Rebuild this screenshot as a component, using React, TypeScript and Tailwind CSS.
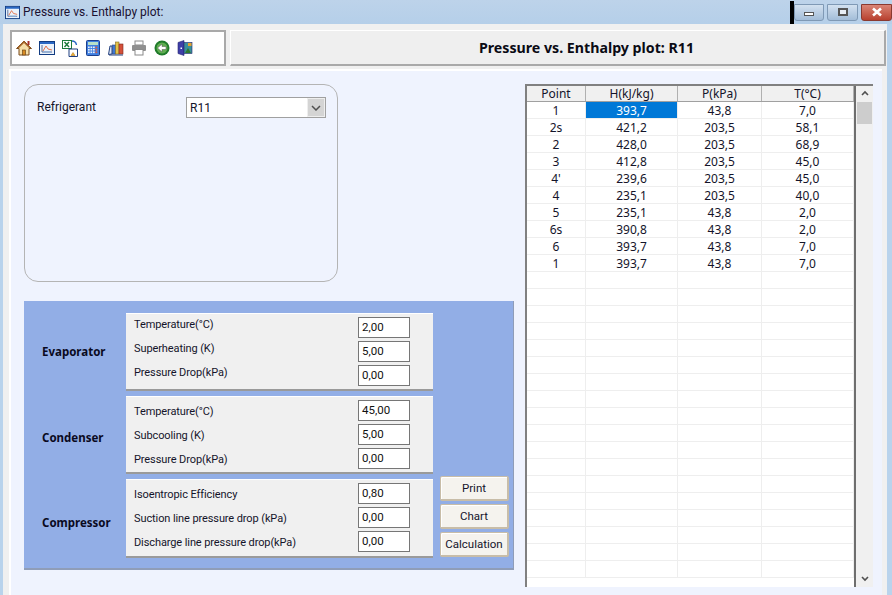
import React from "react";

const rows = [
  ["1", "393,7", "43,8", "7,0"],
  ["2s", "421,2", "203,5", "58,1"],
  ["2", "428,0", "203,5", "68,9"],
  ["3", "412,8", "203,5", "45,0"],
  ["4'", "239,6", "203,5", "45,0"],
  ["4", "235,1", "203,5", "40,0"],
  ["5", "235,1", "43,8", "2,0"],
  ["6s", "390,8", "43,8", "2,0"],
  ["6", "393,7", "43,8", "7,0"],
  ["1", "393,7", "43,8", "7,0"],
];

const groups = [
  {
    name: "Evaporator",
    nameClass: "",
    labelClass: "top-[-2px]",
    items: [["Temperature(°C)", "2,00"], ["Superheating (K)", "5,00"], ["Pressure Drop(kPa)", "0,00"]],
  },
  {
    name: "Condenser",
    nameClass: "pt-[6px]",
    labelClass: "top-[2px]",
    items: [["Temperature(°C)", "45,00"], ["Subcooling (K)", "5,00"], ["Pressure Drop(kPa)", "0,00"]],
  },
  {
    name: "Compressor",
    nameClass: "pt-[8px]",
    labelClass: "top-[2px]",
    items: [["Isoentropic Efficiency", "0,80"], ["Suction line pressure drop (kPa)", "0,00"], ["Discharge line pressure drop(kPa)", "0,00"]],
  },
];

function ChartIcon({ className = "" }: { className?: string }) {
  return (
    <svg viewBox="0 0 16 16" className={className}>
      <rect x="0.5" y="1.5" width="15" height="13" fill="#eaf2fb" stroke="#123c82" />
      <rect x="1" y="2" width="14" height="2" fill="#2a68c4" />
      <path d="M3 5v7h10" fill="none" stroke="#5a6f96" />
      <path d="M4 11 7 6l2 3 4 1" fill="none" stroke="#e2734e" />
      <path d="M4 12h8" stroke="#8fb3dd" />
    </svg>
  );
}

function Toolbar() {
  return (
    <div className="flex h-[36px] w-[216px] shrink-0 items-center gap-[7px] border-2 border-[#a9a9a9] bg-white pl-[4px]">
      <svg viewBox="0 0 16 16" className="h-[16px] w-[16px] shrink-0">
        <path d="M8 1 .5 8.500H3V15h10V8.500h2.500z" fill="#f5dfa8" stroke="#7a4b1c" />
        <path d="M2 8 8 2l6 6" fill="none" stroke="#a8672a" strokeWidth="1.500" />
        <rect x="11.500" y="1" width="2" height="4" fill="#a8322a" />
        <rect x="6.500" y="10" width="3" height="5" fill="#d88a20" stroke="#5c3810" strokeWidth=".6" />
      </svg>
      <ChartIcon className="h-[16px] w-[16px] shrink-0" />
      <svg viewBox="0 0 16 17" className="h-[17px] w-[16px] shrink-0">
        <rect x="0.500" y="0.500" width="9" height="8" fill="#fff" stroke="#1c7a3a" />
        <path d="M2.500 2 7 7M7 2 2.500 7" stroke="#1c7a3a" strokeWidth="1.400" />
        <path d="M7 9h8.500v7.500H7z" fill="#fff" stroke="#1f3f80" />
        <path d="M11 12.500 9 15.500h4z" fill="#f2b632" stroke="#a86a10" strokeWidth=".5" />
        <path d="M10 1c3 0 4 1 4.500 4" fill="none" stroke="#2a68c4" strokeWidth="1.400" />
      </svg>
      <svg viewBox="0 0 16 16" className="h-[16px] w-[16px] shrink-0">
        <rect x="1.500" y="0.500" width="13" height="15" rx="1" fill="#3f7fe0" stroke="#1c3f8c" />
        <rect x="3" y="2" width="10" height="3" fill="#b9e0c8" />
        {[6.5, 9, 11.5].map((y) =>
          [3, 5.5, 8, 10.5].map((x) => (
            <rect key={`${x}-${y}`} x={x} y={y} width="1.700" height="1.600" fill={x === 10.5 ? "#e05c3a" : "#e8f0fc"} />
          ))
        )}
      </svg>
      <svg viewBox="0 0 16 16" className="h-[16px] w-[16px] shrink-0">
        <path d="M.5 14.500 2 6h2v8z" fill="#dfe8f6" stroke="#24407e" />
        <rect x="4.500" y="5" width="3" height="9" fill="#3f78d0" stroke="#24407e" strokeWidth=".6" />
        <rect x="7.500" y="2" width="3.500" height="12" fill="#e4c24a" stroke="#7e6a20" strokeWidth=".6" />
        <rect x="11" y="4" width="4" height="10" fill="#d4503a" stroke="#7e2a20" strokeWidth=".6" />
        <path d="M1 15h14" stroke="#24407e" />
      </svg>
      <svg viewBox="0 0 16 16" className="h-[16px] w-[16px] shrink-0">
        <rect x="4" y="1" width="8" height="4" fill="#fff" stroke="#8a8a8a" />
        <rect x="1" y="5" width="14" height="6" rx="1" fill="#8f8f8f" />
        <rect x="4" y="9.500" width="8" height="5.500" fill="#fff" stroke="#8a8a8a" />
      </svg>
      <svg viewBox="0 0 16 16" className="h-[16px] w-[16px] shrink-0">
        <circle cx="8" cy="8" r="7.500" fill="#1f7a2a" />
        <circle cx="8" cy="8" r="5.500" fill="#5fae50" />
        <path d="M3.500 8 8 4v2.500h4v3H8V12z" fill="#fff" stroke="#555" strokeWidth=".5" />
      </svg>
      <svg viewBox="0 0 16 16" className="h-[16px] w-[16px] shrink-0">
        <path d="M1 2.500 7 .5v15l-6-2z" fill="#3f3fa8" stroke="#25256e" strokeWidth=".6" />
        <rect x="7" y="2.500" width="8" height="11" fill="#3a8f9a" stroke="#25256e" strokeWidth=".6" />
        <path d="M8 13 11 8l3 5z" fill="#2f7a2f" />
        <rect x="11" y="3" width="3.500" height="3" fill="#e8a02f" />
        <rect x="3.500" y="7.500" width="1.500" height="1.500" fill="#fff" />
      </svg>
    </div>
  );
}

function Input({ value }: { value: string }) {
  return (
    <div className="flex h-[21px] w-[52px] items-center border border-[#767676] bg-white pl-[3px] font-['Roboto',sans-serif] text-[11.5px] text-[#111]">
      {value}
    </div>
  );
}

function Group({ g, className }: { g: (typeof groups)[number]; className: string }) {
  return (
    <div className={`flex ${className}`}>
      <div className={`flex w-[102px] items-center pl-[18px] text-[11.5px] font-bold text-[#0a0a1e] ${g.nameClass}`}>{g.name}</div>
      <div className="flex w-[307px] flex-col gap-[3px] border-t border-white border-b-2 border-b-[#9a9a9a] bg-[#f0f0f0] pl-[8px] pr-[23px] pt-[3px]">
        {g.items.map(([label, value]) => (
          <div key={label + value} className="flex h-[21px] items-center justify-between">
            <span className={`relative ${g.labelClass} font-['Roboto',sans-serif] text-[11px] tracking-[-0.1px] text-[#14142a]`}>{label}</span>
            <Input value={value} />
          </div>
        ))}
      </div>
    </div>
  );
}

function Btn({ label }: { label: string }) {
  return (
    <div className="flex h-[25px] w-[69px] items-center justify-center rounded-[2px] border border-[#c8bda8] border-r-2 border-b-2 bg-[#f5f3ee] pt-[2px] font-['Roboto',sans-serif] text-[11.5px] text-[#14142a] shadow-[inset_1px_1px_0_#fff]">
      {label}
    </div>
  );
}

const cols = ["w-[59px]", "w-[92px]", "w-[84px]", "w-[92px]"];

function Table() {
  return (
    <div className="flex h-[503px] w-[348px] shrink-0 border-l-2 border-t-2 border-[#808080] bg-white">
      <div className="flex w-[329px] shrink-0 flex-col overflow-hidden border-r-2 border-[#6e6e6e]">
        <div className="flex h-[16px] shrink-0 border-b border-[#a0a0a0] bg-[#f0f0f0] text-[12px] text-[#14142a]">
          {["Point", "H(kJ/kg)", "P(kPa)", "T(°C)"].map((h, i) => (
            <div key={h} className={`${cols[i]} flex items-center justify-center border-r border-[#b0b0b0]`}>{h}</div>
          ))}
        </div>
        {Array.from({ length: 28 }).map((_, r) => (
          <div key={r} className="flex h-[17px] shrink-0 border-b border-[#eeeeee] text-[12px] text-[#14142a]">
            {cols.map((c, i) => (
              <div
                key={i}
                className={`${c} flex items-center justify-center border-r border-[#eeeeee] pt-[1px] ${
                  r === 0 && i === 1 ? "bg-[#0078d7] text-white" : ""
                }`}
              >
                {rows[r]?.[i] ?? ""}
              </div>
            ))}
          </div>
        ))}
      </div>
      <div className="flex w-[17px] shrink-0 flex-col items-center justify-between bg-[#f0f0f0] pb-[5px] pt-[4px]">
        <div className="flex w-full flex-col items-center">
          <svg viewBox="0 0 8 6" className="h-[6px] w-[8px]">
            <path d="M1 5 4 2l3 3" fill="none" stroke="#505050" strokeWidth="1.600" />
          </svg>
          <div className="mt-[6px] h-[22px] w-[15px] bg-[#cdcdcd]" />
        </div>
        <svg viewBox="0 0 8 6" className="h-[6px] w-[8px]">
          <path d="M1 1 4 4l3-3" fill="none" stroke="#505050" strokeWidth="1.600" />
        </svg>
      </div>
    </div>
  );
}

export default function App() {
  return (
    <div className="flex h-[595px] w-[892px] flex-col overflow-hidden bg-[#b9d3ec] font-['Noto_Sans','DejaVu_Sans',sans-serif]">
      <div className="flex h-[24px] shrink-0 items-center bg-gradient-to-b from-[#bdd3ea] to-[#b5cfe9] pl-[5px]">
        <ChartIcon className="h-[15px] w-[15px]" />
        <span className="ml-[3px] font-['Roboto',sans-serif] text-[12px] text-[#1a1030]">Pressure vs. Enthalpy plot:</span>
        <div className="ml-auto flex h-[23px] items-start">
          <div className="h-[23px] w-[4px] bg-black" />
          <div className="mt-[3px] flex h-[17px] w-[30px] items-center justify-center rounded-b-[3px] border border-[#7f99b5] bg-gradient-to-b from-[#d3e1f0] to-[#a3bdd8]">
            <div className="mt-[3px] h-[4px] w-[10px] border border-[#555] bg-white" />
          </div>
          <div className="ml-[3px] mt-[3px] flex h-[17px] w-[31px] items-center justify-center rounded-b-[3px] border border-[#7f99b5] bg-gradient-to-b from-[#d3e1f0] to-[#a3bdd8]">
            <div className="h-[8px] w-[10px] border-2 border-[#555] bg-[#e8eef5]" />
          </div>
          <div className="ml-[3px] mt-[3px] flex h-[17px] w-[31px] items-center justify-center rounded-b-[3px] border border-[#8a3a30] bg-gradient-to-b from-[#d98475] to-[#b8402f]">
            <svg viewBox="0 0 12 10" className="h-[10px] w-[12px]">
              <path d="M2 1.500 10 8.500M10 1.500 2 8.500" stroke="#fff" strokeWidth="2.600" />
            </svg>
          </div>
        </div>
      </div>

      <div className="ml-[3px] mr-[5px] flex min-h-0 flex-1 flex-col bg-[#f0f0f0] pl-[6px] pr-[1px] pt-[6px]">
        <div className="flex shrink-0 gap-[4px] pl-px">
          <Toolbar />
          <div className="flex h-[36px] flex-1 items-center justify-center border border-white border-b-2 border-b-[#a9a9a9] border-r-2 border-r-[#a9a9a9] bg-[#efefef] pl-[58px] text-[14.200px] font-bold text-[#0a0a14]">
            Pressure vs. Enthalpy plot: R11
          </div>
        </div>

        <div className="mr-[4px] mt-[3px] flex min-h-0 flex-1 gap-[11px] border-l-2 border-t-2 border-white bg-[#eff3fe] pl-[13px] pt-[13px]">
          <div className="flex w-[490px] shrink-0 flex-col">
            <div className="flex h-[198px] w-[314px] items-start rounded-[14px] border border-[#b4b4b4] pl-[12px] pt-[12px]">
              <span className="mt-[1px] w-[149px] font-['Roboto',sans-serif] text-[12px] text-[#14142a]">Refrigerant</span>
              <div className="flex h-[21px] w-[140px] items-center justify-between border border-[#a0a0a0] bg-white pl-[3px] font-['Roboto',sans-serif] text-[12px] text-[#14142a]">
                R11
                <div className="flex h-[19px] w-[18px] items-center justify-center bg-[#d4d4d4] shadow-[inset_0_0_0_1px_#eee]">
                  <svg viewBox="0 0 10 6" className="h-[6px] w-[10px]">
                    <path d="M1 1 5 5l4-4" fill="none" stroke="#505050" strokeWidth="1.500" />
                  </svg>
                </div>
              </div>
            </div>

            <div className="mt-[19px] flex h-[269px] flex-col border-b-2 border-r border-[#8f9db8] bg-[#92aee6] pt-[12px]">
              <div className="flex flex-col gap-[5px]">
                <Group g={groups[0]} className="h-[78px]" />
                <Group g={groups[1]} className="h-[78px]" />
                <div className="flex items-start">
                  <Group g={groups[2]} className="h-[79px]" />
                  <div className="ml-[7px] mt-[-3px] flex flex-col gap-[3px]">
                    {["Print", "Chart", "Calculation"].map((b) => (
                      <Btn key={b} label={b} />
                    ))}
                  </div>
                </div>
              </div>
            </div>
          </div>
          <Table />
        </div>
      </div>
    </div>
  );
}
